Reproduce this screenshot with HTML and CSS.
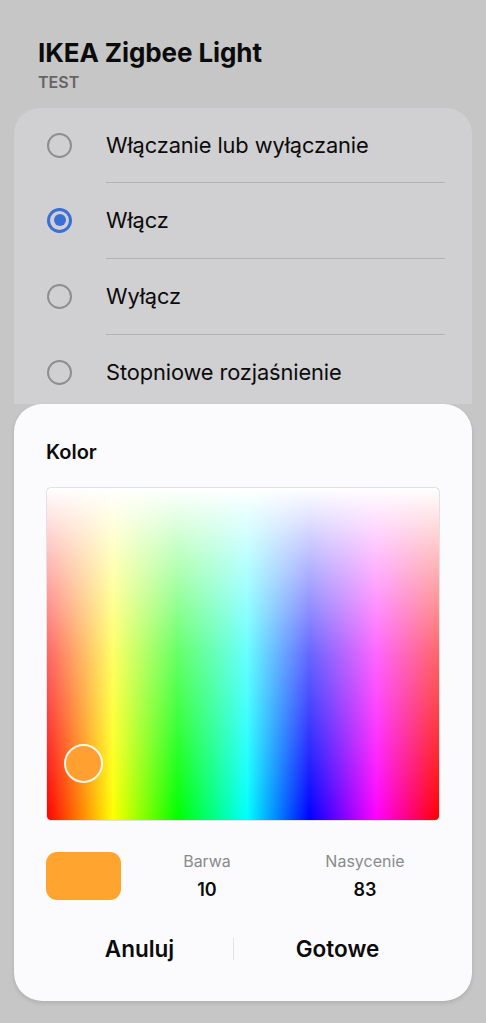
FILE: index.html
```html
<!DOCTYPE html>
<html lang="pl">
<head>
<meta charset="utf-8">
<link rel="stylesheet" href="styles.css">
</head>
<body>
<div class="screen">
  <header class="head">
    <h1 class="title">IKEA Zigbee Light</h1>
    <div class="subtitle">TEST</div>
  </header>
  <section class="card">
    <div class="row"><span class="radio"></span><span class="label">Włączanie lub wyłączanie</span></div>
    <div class="row"><span class="radio on"></span><span class="label">Włącz</span></div>
    <div class="row"><span class="radio"></span><span class="label">Wyłącz</span></div>
    <div class="row"><span class="radio"></span><span class="label">Stopniowe rozjaśnienie</span></div>
  </section>
  <section class="sheet">
    <div class="sheet-title">Kolor</div>
    <div class="picker">
      <span class="handle"></span>
    </div>
    <div class="values">
      <div class="swatch"></div>
      <div class="val hue"><div class="val-label">Barwa</div><div class="val-num">10</div></div>
      <div class="val sat"><div class="val-label">Nasycenie</div><div class="val-num">83</div></div>
    </div>
    <div class="actions">
      <button class="btn cancel">Anuluj</button>
      <span class="sep"></span>
      <button class="btn done">Gotowe</button>
    </div>
  </section>
</div>
</body>
</html>
```

FILE: styles.css
```css
* { box-sizing: border-box; }
html, body { margin: 0; padding: 0; }
body {
  background: #c6c6c6;
  font-family: Inter, Roboto, "Noto Sans", sans-serif;
  color: #0b0b0b;
  width: 486px;
  height: 1023px;
  overflow: hidden;
}
.screen { padding: 0 14px; }
.head { padding: 37px 0 0 24px; height: 108px; }
.title {
  margin: 0;
  font-size: 26px;
  font-weight: 700;
  line-height: 32px;
  letter-spacing: -0.1px;
}
.subtitle {
  margin-top: 3px;
  font-size: 16px;
  font-weight: 600;
  color: #646464;
  line-height: 20px;
}
.card {
  background: #d0d0d2;
  border-radius: 26px 26px 0 0;
  height: 296px;
}
.row {
  display: flex;
  align-items: center;
  height: 76px;
  position: relative;
}
.row:first-child { height: 74px; }
.row + .row::before {
  content: "";
  position: absolute;
  top: 0;
  left: 92px;
  right: 27px;
  height: 1px;
  background: #b2b2b4;
}
.radio {
  width: 25px;
  height: 25px;
  border: 2px solid #8e8e90;
  border-radius: 50%;
  margin-left: 33px;
  margin-right: 34px;
  flex: none;
  display: flex;
  align-items: center;
  justify-content: center;
}
.radio.on { border: 3px solid #3a6fd6; }
.radio.on::after {
  content: "";
  width: 12px;
  height: 12px;
  border-radius: 50%;
  background: #3a6fd6;
}
.label { font-size: 21.8px; line-height: 26px; letter-spacing: -0.1px; }
.sheet {
  background: #fbfbfd;
  border-radius: 28px;
  height: 597px;
  padding: 36px 32px 0 32px;
  box-shadow: 0 2px 4px rgba(0,0,0,0.12);
}
.sheet-title {
  font-size: 20px;
  font-weight: 600;
  line-height: 24px;
}
.picker {
  margin-top: 23px;
  height: 334px;
  border-radius: 5px;
  border: 1px solid #e2e2e6;
  position: relative;
  background:
    linear-gradient(to bottom, rgba(255,255,255,1) 0%, rgba(255,255,255,0.75) 20%, rgba(255,255,255,0.4) 50%, rgba(255,255,255,0) 100%),
    linear-gradient(to right, #ff0000 0%, #ffff00 16.8%, #00ff00 33.3%, #00ffff 51%, #0000ff 67%, #ff00ff 84%, #ff0000 100%);
}
.handle {
  position: absolute;
  left: 17px;
  top: 256px;
  width: 39px;
  height: 39px;
  border-radius: 50%;
  border: 2.5px solid #fff8ee;
  background: #ffa030;
}
.values {
  display: flex;
  align-items: center;
  margin-top: 31px;
  height: 48px;
}
.swatch {
  width: 75px;
  height: 48px;
  border-radius: 11px;
  background: #ffa52f;
  flex: none;
}
.val { text-align: center; flex: none; }
.val.hue { width: 172px; }
.val.sat { width: 144px; }
.val-label { font-size: 16px; color: #8a8a8a; line-height: 18px; }
.val-num { font-size: 18px; font-weight: 600; margin-top: 10px; line-height: 20px; }
.actions {
  display: flex;
  align-items: center;
  margin-top: 31px;
  height: 36px;
}
.btn {
  background: none;
  border: 0;
  font-family: inherit;
  font-size: 22.5px;
  font-weight: 600;
  color: #0b0b0b;
  padding: 0;
  line-height: 28px;
  flex: none;
}
.btn.cancel { width: 187px; }
.btn.done { width: 207px; }
.sep { width: 1px; height: 22px; background: #e4e4e6; flex: none; }
```
